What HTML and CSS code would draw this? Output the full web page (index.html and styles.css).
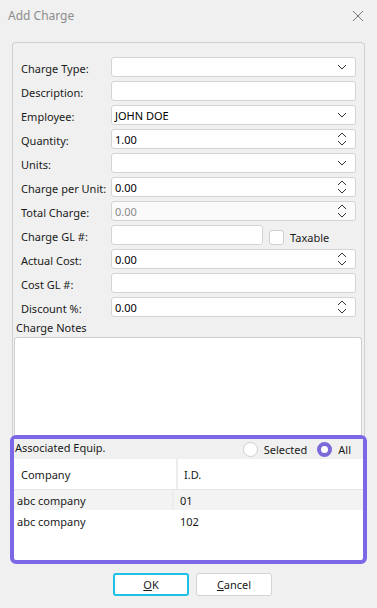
FILE: index.html
```html
<!DOCTYPE html>
<html>
<head>
  <title>Add Charge</title>
  <link rel="stylesheet" href="styles.css">
</head>
<body>
  <div class="titlebar">
    <span class="title">Add Charge</span>
    <svg class="close" width="12" height="12" viewBox="0 0 12 12"><path d="M1 1L11 11M11 1L1 11" stroke="#777" stroke-width="1" fill="none"/></svg>
  </div>

  <div class="group">
    <div class="row">
      <label>Charge Type:</label>
      <div class="field"><span></span>
        <svg class="drop" width="10" height="6" viewBox="0 0 10 6"><path d="M1 1L5 5L9 1" stroke="#333" fill="none"/></svg>
      </div>
    </div>
    <div class="row">
      <label>Description:</label>
      <div class="field"><span></span></div>
    </div>
    <div class="row">
      <label>Employee:</label>
      <div class="field"><span>JOHN DOE</span>
        <svg class="drop" width="10" height="6" viewBox="0 0 10 6"><path d="M1 1L5 5L9 1" stroke="#333" fill="none"/></svg>
      </div>
    </div>
    <div class="row">
      <label>Quantity:</label>
      <div class="field"><span>1.00</span>
        <svg class="spin" width="10" height="14" viewBox="0 0 10 14"><path d="M1 5L5 1L9 5M1 9L5 13L9 9" stroke="#333" fill="none"/></svg>
      </div>
    </div>
    <div class="row">
      <label>Units:</label>
      <div class="field"><span></span>
        <svg class="drop" width="10" height="6" viewBox="0 0 10 6"><path d="M1 1L5 5L9 1" stroke="#333" fill="none"/></svg>
      </div>
    </div>
    <div class="row">
      <label>Charge per Unit:</label>
      <div class="field"><span>0.00</span>
        <svg class="spin" width="10" height="14" viewBox="0 0 10 14"><path d="M1 5L5 1L9 5M1 9L5 13L9 9" stroke="#333" fill="none"/></svg>
      </div>
    </div>
    <div class="row">
      <label>Total Charge:</label>
      <div class="field disabled"><span>0.00</span>
        <svg class="spin" width="10" height="14" viewBox="0 0 10 14"><path d="M1 5L5 1L9 5M1 9L5 13L9 9" stroke="#333" fill="none"/></svg>
      </div>
    </div>
    <div class="row">
      <label>Charge GL #:</label>
      <div class="split">
        <div class="field short"><span></span></div>
        <div class="check"><span class="box"></span>Taxable</div>
      </div>
    </div>
    <div class="row">
      <label>Actual Cost:</label>
      <div class="field"><span>0.00</span>
        <svg class="spin" width="10" height="14" viewBox="0 0 10 14"><path d="M1 5L5 1L9 5M1 9L5 13L9 9" stroke="#333" fill="none"/></svg>
      </div>
    </div>
    <div class="row">
      <label>Cost GL #:</label>
      <div class="field"><span></span></div>
    </div>
    <div class="row">
      <label>Discount %:</label>
      <div class="field"><span>0.00</span>
        <svg class="spin" width="10" height="14" viewBox="0 0 10 14"><path d="M1 5L5 1L9 5M1 9L5 13L9 9" stroke="#333" fill="none"/></svg>
      </div>
    </div>

    <div class="notes">
      <div class="notes-label">Charge Notes</div>
      <div class="notes-box"></div>
    </div>
  </div>

  <div class="equip">
    <div class="equip-head">
      <span class="equip-title">Associated Equip.</span>
      <div class="radios">
        <span class="radio"><span class="dot"></span>Selected</span>
        <span class="radio"><span class="dot on"></span>All</span>
      </div>
    </div>
    <div class="table">
      <div class="thead">
        <div class="cell col1">Company</div>
        <div class="cell col2">I.D.</div>
      </div>
      <div class="trow alt">
        <div class="cell col1">abc company</div>
        <div class="cell col2">01</div>
      </div>
      <div class="trow">
        <div class="cell col1">abc company</div>
        <div class="cell col2">102</div>
      </div>
    </div>
  </div>

  <div class="buttons">
    <button class="btn default"><u>O</u>K</button>
    <button class="btn"><u>C</u>ancel</button>
  </div>
</body>
</html>
```

FILE: styles.css
```css
body {
  margin: 0;
  background-color: #f0f0f0;
  font-family: "Noto Sans", "Open Sans", sans-serif;
  font-size: 11px;
  color: #1a1a1a;
  width: 377px;
}

.titlebar {
  height: 30px;
  display: flex;
  align-items: center;
  justify-content: space-between;
  padding: 0 13px 0 8px;
}

.title {
  color: #8c8c8c;
  font-size: 12px;
}

.close {
  display: block;
  margin-top: 1px;
}

.group {
  margin: 12px 12px 0 12px;
  border: 1px solid #d0d0d0;
  border-bottom: none;
  border-radius: 4px 4px 0 0;
  padding: 14px 8px 0 8px;
  height: 396px;
  box-sizing: border-box;
  overflow: hidden;
}

.row {
  display: grid;
  grid-template-columns: 90px 1fr;
  align-items: center;
  height: 20px;
  margin-bottom: 4px;
}

.row label {
  padding-top: 2px;
}

.field {
  height: 20px;
  box-sizing: border-box;
  background-color: #fff;
  border: 1px solid #d4d4d4;
  border-radius: 3px;
  display: flex;
  align-items: center;
  justify-content: space-between;
  padding: 0 8px 0 3px;
  color: #000;
}

.field.disabled {
  background-color: #fafafa;
  color: #8a8a8a;
}

.drop {
  display: block;
}

.spin {
  display: block;
}

.split {
  display: flex;
  align-items: center;
}

.field.short {
  width: 152px;
}

.check {
  display: flex;
  align-items: center;
  margin-left: 6px;
  margin-top: 5px;
}

.check .box {
  width: 13px;
  height: 13px;
  background-color: #fff;
  border: 1px solid #cfcfcf;
  border-radius: 3px;
  margin-right: 6px;
}

.notes {
  margin: 0 -6px 0 -7px;
}

.notes-label {
  padding: 0 2px;
  height: 16px;
  line-height: 14px;
}

.notes-box {
  background-color: #fff;
  border: 1px solid #d0d0d0;
  border-bottom: none;
  border-radius: 3px 3px 0 0;
  height: 120px;
}

.equip {
  margin: -3px 0 0 10px;
  width: 357px;
  height: 129px;
  box-sizing: border-box;
  border: 4px solid #7b68e6;
  border-radius: 6px;
  background-color: #fff;
  position: relative;
}

.equip-head {
  height: 20px;
  background-color: #f0f0f0;
  display: flex;
  align-items: center;
  justify-content: space-between;
  padding: 0 12px 0 1px;
}

.equip-title {
  margin-top: -3px;
}

.radios {
  display: flex;
  align-items: center;
}

.radio {
  display: flex;
  align-items: center;
  margin-left: 10px;
}

.dot {
  width: 15px;
  height: 15px;
  box-sizing: border-box;
  border-radius: 50%;
  border: 1px solid #cfcfcf;
  background-color: #fff;
  margin-right: 6px;
}

.dot.on {
  border: 4px solid #7b68d9;
}

.thead {
  display: flex;
  height: 30px;
  border-bottom: 1px solid #e6e6e6;
}

.trow {
  display: flex;
  height: 20px;
  margin-bottom: 1px;
}

.trow.alt {
  background-color: #f3f3f3;
}

.cell {
  display: flex;
  align-items: center;
}

.col1 {
  width: 155px;
  padding-left: 3px;
  border-right: 2px solid #ececec;
}

.thead .col1 {
  padding-left: 7px;
}

.trow + .trow .col1 {
  border-right-color: transparent;
}

.col2 {
  padding-left: 6px;
}

.buttons {
  display: flex;
  justify-content: center;
  gap: 7px;
  padding: 9px 0 0 8px;
}

.btn {
  width: 76px;
  height: 23px;
  background-color: #fff;
  border: 1px solid #d4d4d4;
  border-radius: 3px;
  font-family: "Noto Sans", "Open Sans", sans-serif;
  font-size: 11px;
  color: #1a1a1a;
  padding: 0;
}

.btn.default {
  border: 2px solid #1fc0e6;
}
```
